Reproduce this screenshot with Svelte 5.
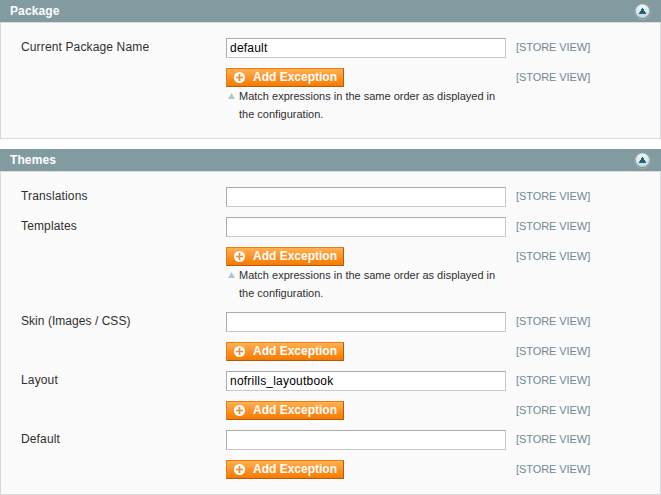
<script>
  const help = ['Match expressions in the same order as displayed in', 'the configuration.'];
  const sections = [
    {
      title: 'Package',
      rows: [
        { label: 'Current Package Name', value: 'default' },
        { button: true, help: true },
      ],
    },
    {
      title: 'Themes',
      rows: [
        { label: 'Translations', value: '' },
        { label: 'Templates', value: '' },
        { button: true, help: true },
        { label: 'Skin (Images / CSS)', value: '', tight: true },
        { button: true },
        { label: 'Layout', value: 'nofrills_layoutbook' },
        { button: true },
        { label: 'Default', value: '' },
        { button: true },
      ],
    },
  ];
</script>

<main>
  {#each sections as section}
    <section>
      <header>
        <h2>{section.title}</h2>
        <svg class="toggle" width="17" height="17" viewBox="0 0 17 17">
          <defs>
            <linearGradient id="knob-{section.title}" x1="0" y1="0" x2="0" y2="1">
              <stop offset="0" stop-color="#f4f8f8" />
              <stop offset="1" stop-color="#c3d6da" />
            </linearGradient>
          </defs>
          <circle cx="8.5" cy="8.8" r="7.6" fill="#728f96" stroke="#a3b7bb" stroke-width="1" />
          <circle cx="8.5" cy="8.3" r="6.7" fill="url(#knob-{section.title})" />
          <path d="M8 5h1v1h1v2h1v1.500h1V11H5V9.500h1V8h1V6h1z" fill="#1f6276" />
        </svg>
      </header>
      <div class="body">
        {#each section.rows as row}
          <div class="row" class:action={row.button} class:noted={row.help}>
            <div class="label" class:tight={row.tight}>{row.label ?? ''}</div>
            <div class="field">
              {#if row.button}
                <button type="button">
                  <svg width="12" height="13" viewBox="0 0 12 13">
                    <circle cx="5.5" cy="6.5" r="5.6" fill="#fff" />
                    <path d="M5.500 3v7M2 6.500h7" stroke="#f0892a" stroke-width="1.700" />
                  </svg>
                  <span>Add Exception</span>
                </button>
                {#if row.help}
                  <p class="help">
                    <svg width="7" height="6" viewBox="0 0 7 6"><path d="M3.500 0L7 6H0z" fill="#b5c5ca" /></svg>
                    <span>{help[0]}<br />{help[1]}</span>
                  </p>
                {/if}
              {:else}
                <input type="text" value={row.value} />
              {/if}
            </div>
            <div class="scope">[STORE VIEW]</div>
          </div>
        {/each}
      </div>
    </section>
  {/each}
</main>

<style>
  :global(body) {
    margin: 0;
    background: #fff;
  }
  main {
    width: 661px;
    height: 495px;
    overflow: hidden;
    display: flex;
    flex-direction: column;
    gap: 10px;
    font: 12px/18px 'Liberation Sans', Arial, sans-serif;
    color: #2f2f2f;
  }
  header {
    display: flex;
    justify-content: space-between;
    box-sizing: border-box;
    height: 22px;
    padding: 0 10px;
    background: #829ba1;
  }
  h2 {
    margin: 0;
    font-size: 12px;
    line-height: 22px;
    font-weight: bold;
    letter-spacing: 0.1px;
    color: #fff;
  }
  .toggle {
    display: block;
    margin-top: 3px;
  }
  .body {
    box-sizing: border-box;
    border: 1px solid #d9dadb;
    background: #fbfbfb;
    padding: 15px 0 15px 20px;
  }
  section:first-child .body {
    height: 117px;
  }
  section:last-child .body {
    height: 324px;
  }
  .row {
    display: flex;
    height: 30px;
  }
  .action {
    height: 29px;
  }
  .noted {
    height: 65px;
  }
  .label {
    width: 205px;
    letter-spacing: 0.14px;
  }
  .tight {
    letter-spacing: 0.04px;
  }
  .field {
    width: 290px;
  }
  .scope {
    font-size: 11px;
    letter-spacing: -0.07px;
    color: #6f8992;
  }
  input {
    display: block;
    box-sizing: border-box;
    width: 280px;
    height: 20px;
    margin: 0;
    padding: 0 3px;
    border: 1px solid;
    border-color: #aaa #c8c8c8 #c8c8c8 #aaa;
    border-radius: 0;
    background: #fff;
    color: #000;
    font: 12px 'Liberation Sans', Arial, sans-serif;
    letter-spacing: 0.21px;
  }
  button {
    display: flex;
    align-items: flex-start;
    gap: 7px;
    box-sizing: border-box;
    width: 118px;
    height: 19px;
    margin: 0;
    padding: 0 0 0 7px;
    border: 1px solid;
    border-color: #ed7a12 #b85a0c #b85a0c #ed7a12;
    border-radius: 0;
    background: linear-gradient(#ffb251, #fc9228 50%, #f77c00);
    color: #fff;
    font: bold 12px/16px 'Liberation Sans', Arial, sans-serif;
    white-space: nowrap;
  }
  button svg {
    margin-top: 2px;
  }
  .help {
    display: flex;
    gap: 4px;
    margin: 0;
    padding-left: 2px;
    font-size: 11px;
    white-space: nowrap;
  }
  .help svg {
    margin-top: 6px;
  }
</style>
